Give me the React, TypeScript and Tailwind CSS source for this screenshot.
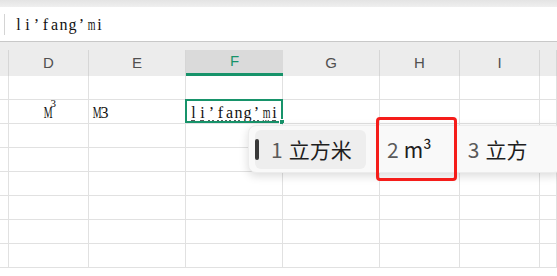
import React from 'react';

const cols = [9, 80, 97, 97, 97, 80, 80, 17];
const letters = ['', 'D', 'E', 'F', 'G', 'H', 'I', ''];
const serif = "font-['Liberation_Serif','Noto_Sans_CJK_SC',serif]";
const cjk = "font-['Noto_Sans_CJK_SC','Noto_Sans',sans-serif]";

// SimSun-like fixed pitch: each glyph sits centered in a 9px slot, wide ones squeezed
function Fixed({ text, underline }: { text: string; underline?: boolean }) {
  return (
    <span className={`${serif} text-[16px] text-[#111] leading-none whitespace-nowrap`}>
      {text.split('').map((c, i) => (
        <span
          key={i}
          className={`inline-block w-[9px] text-center ${c === 'M' || c === 'm' ? 'scale-x-[0.62]' : ''} ${
            underline ? 'underline decoration-dotted decoration-[#333] underline-offset-[3px]' : ''
          }`}
        >
          {c}
        </span>
      ))}
    </span>
  );
}

function Row({ children }: { children?: (i: number) => React.ReactNode }) {
  return (
    <div className="flex h-[24px]">
      {cols.map((w, i) => (
        <div
          key={i}
          style={{ width: w }}
          className="relative shrink-0 border-r border-b border-[#e1e1e1] flex items-center"
        >
          {children ? children(i) : null}
        </div>
      ))}
    </div>
  );
}

export default function App() {
  return (
    <div className="relative w-[557px] h-[276px] overflow-hidden bg-white">
      <div className="h-[7px] bg-gradient-to-b from-[#e4e4e4] to-[#efefef]" />

      {/* formula bar */}
      <div className="h-[35px] border-b border-[#c8c8c8] flex items-center">
        <div className="ml-[4px] w-px h-[21px] bg-[#d4d4d4]" />
        <span className="ml-[9px]">
          <Fixed text="li’fang’mi" />
        </span>
      </div>

      {/* column header */}
      <div className="h-[34px] bg-[#ececec] pt-[8px] flex">
        {cols.map((w, i) => (
          <div
            key={i}
            style={{ width: w }}
            className={`shrink-0 h-[26px] flex items-center justify-center font-['Liberation_Sans',sans-serif] text-[15px] ${
              i === 3
                ? 'bg-[#dadada] border-b-[3px] border-[#17936a] text-[#17936a]'
                : 'border-r border-[#d6d6d6] text-[#505050]'
            }`}
          >
            {letters[i]}
          </div>
        ))}
      </div>

      <Row />
      <Row>
        {(i) => {
          if (i === 1)
            return (
              <span className="w-full flex justify-center">
                <span className="relative">
                  <Fixed text="M" />
                  <span className={`${serif} absolute left-[9px] top-[-2px] leading-none text-[11px] text-[#111]`}>3</span>
                </span>
                <span className="w-[5px]" />
              </span>
            );
          if (i === 2)
            return (
              <span className="pl-[2px]">
                <Fixed text="M3" />
              </span>
            );
          if (i === 3)
            return (
              <>
                <span className="pl-[3px]">
                  <Fixed text="li’fang’mi" underline />
                </span>
                <div className="absolute -left-px -top-px -right-px bottom-0 border-2 border-[#17936a]" />
                <div className="absolute right-[-3px] bottom-[-2px] w-[6px] h-[6px] bg-[#17936a] border border-white" />
              </>
            );
          return null;
        }}
      </Row>
      <Row />
      <Row />
      <Row />
      <Row />
      <Row />
      <Row />

      {/* IME candidate window */}
      <div className="absolute left-[248px] top-[125px] w-[314px] h-[48px] rounded-[8px] bg-[#f9f9f9] shadow-[0_3px_10px_rgba(0,0,0,0.14)] border border-[#ececec] flex items-center pl-[6px]">
        <div className="relative w-[111px] h-[39px] rounded-[6px] bg-[#eeeeee] flex items-center pl-[16px]">
          <div className="absolute left-0 top-[9px] w-[4px] h-[21px] rounded-full bg-[#3a3a3a]" />
          <span className={`${cjk} text-[21px] leading-none text-[#5a5a5a]`}>1</span>
          <span className={`${cjk} ml-[6px] text-[21px] leading-none text-[#1e1e1e]`}>立方米</span>
        </div>
        <div className="ml-[21px] flex items-center">
          <span className={`${cjk} text-[21px] leading-none text-[#5a5a5a]`}>2</span>
          <span className={`${cjk} ml-[5px] text-[21px] leading-none text-[#1e1e1e]`}>m³</span>
        </div>
        <div className="ml-[36px] flex items-center">
          <span className={`${cjk} text-[21px] leading-none text-[#5a5a5a]`}>3</span>
          <span className={`${cjk} ml-[6px] text-[21px] leading-none text-[#1e1e1e]`}>立方</span>
        </div>
      </div>

      {/* red annotation box */}
      <div className="absolute left-[376px] top-[117px] w-[81px] h-[64px] rounded-[4px] border-[3px] border-[#f51d1a]" />
    </div>
  );
}
